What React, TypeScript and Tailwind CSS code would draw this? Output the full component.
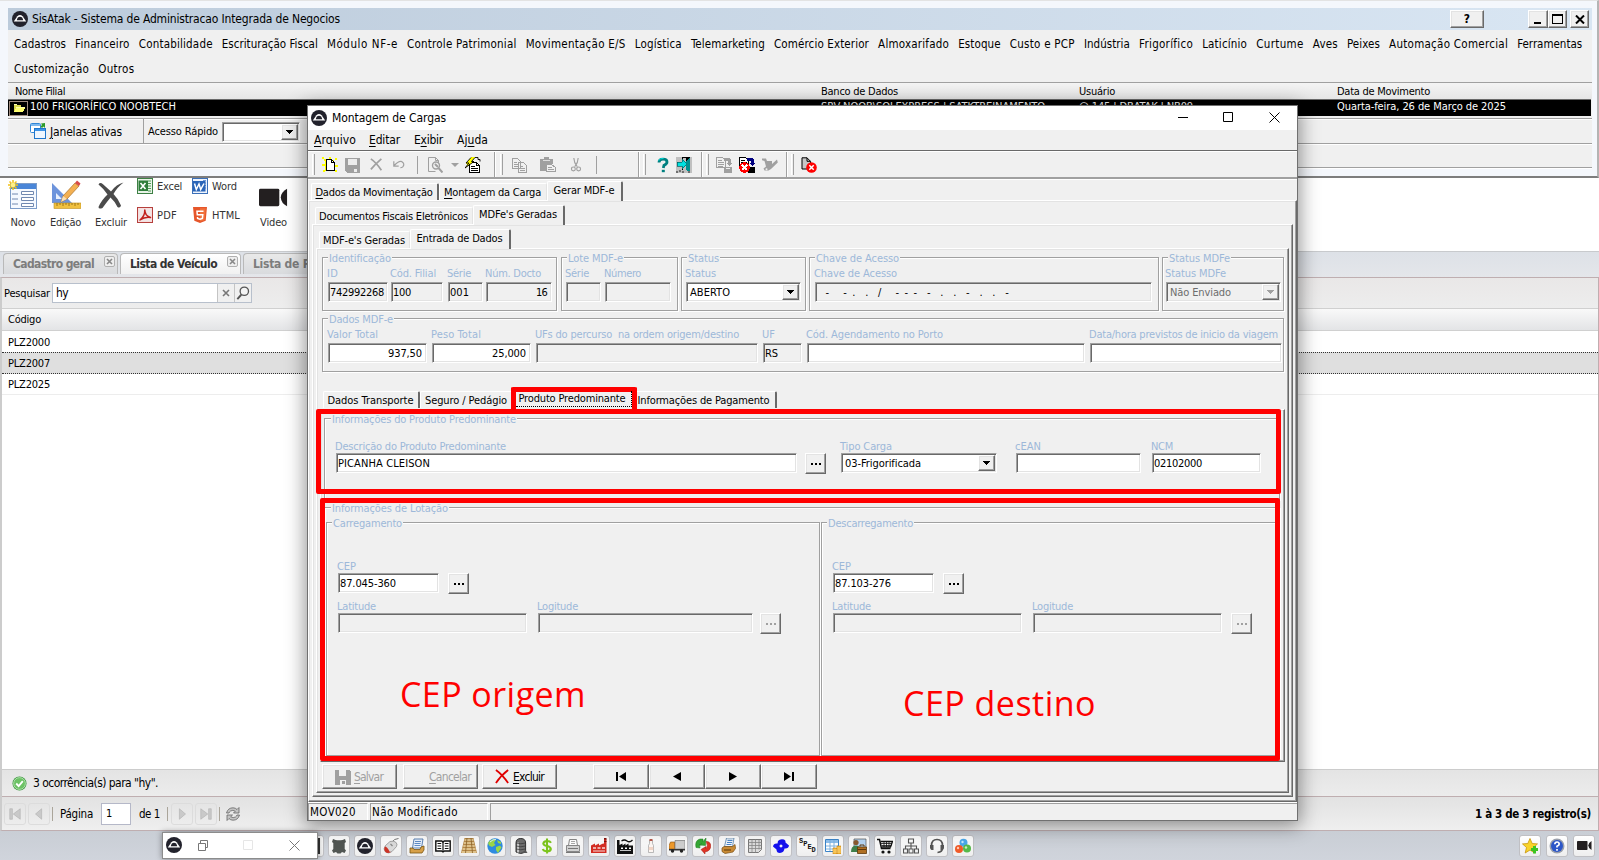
import React, { useLayoutEffect, useRef, useState } from "react";

/* ---------- text ---------- */

type TProps = { w?: number; className?: string; children: string; u?: number };

/* Text run whose tracking is adjusted so that it takes up exactly `w` pixels. `u` underlines one letter. */
function T({ w, className = "", children, u }: TProps) {
  const ref = useRef<HTMLSpanElement>(null);
  const [ls, setLs] = useState(0);
  useLayoutEffect(() => {
    if (!w || !ref.current) return;
    const natural = ref.current.getBoundingClientRect().width - ls * children.length;
    setLs((w - natural) / children.length);
  }, [w, children]);
  return (
    <span ref={ref} style={{ letterSpacing: ls }} className={"inline-block shrink-0 whitespace-pre leading-[14px] " + className}>
      {u === undefined ? (
        children
      ) : (
        <>
          {children.slice(0, u)}
          <span className="underline underline-offset-2">{children[u]}</span>
          {children.slice(u + 1)}
        </>
      )}
    </span>
  );
}

/* ---------- bevels ---------- */

const RAISED =
  "border border-t-white border-l-white border-r-[#696969] border-b-[#696969] shadow-[inset_-1px_-1px_0_#a0a0a0,inset_1px_1px_0_#e3e3e3]";
const SUNKEN =
  "border border-t-[#a0a0a0] border-l-[#a0a0a0] border-r-white border-b-white shadow-[inset_1px_1px_0_#696969,inset_-1px_-1px_0_#e3e3e3]";

function Group({ title, tw, className = "", pl = "pl-[5px]", children }: { title: string; tw: number; className?: string; pl?: string; children?: React.ReactNode }) {
  return (
    <div className={"shrink-0 border border-[#a0a0a0] shadow-[inset_1px_1px_0_#fff,1px_1px_0_#fff] " + className}>
      <div className={"flex h-0 items-center " + pl}>
        <span className="flex shrink-0 bg-[#f0f0f0] px-px">
          <T w={tw} className="!leading-[13px] text-[#9db8d9]">{title}</T>
        </span>
      </div>
      {children}
    </div>
  );
}

function Field({ label, lw, className = "", value = "", vw, right, grey, tight, combo, off }: {
  label: string; lw: number; className?: string; value?: string; vw?: number;
  right?: boolean; grey?: boolean; tight?: boolean; combo?: boolean; off?: boolean;
}) {
  return (
    <div className={"flex shrink-0 flex-col " + (tight ? "" : "gap-[2px] ") + className}>
      <div className="flex h-[14px] items-start pt-px">
        <T w={lw} className="-ml-px !leading-[13px] text-[#9db8d9]">{label}</T>
      </div>
      <div className={SUNKEN + " flex h-[20px] items-center " + (grey || off ? "bg-[#f0f0f0] " : "bg-white ") + (combo ? "pr-px pl-[3px]" : right ? "justify-end pr-[4px]" : "pl-px")}>
        <T w={vw} className={(combo ? "pt-[2px] " : "pt-px ") + (off ? "text-[#6d6d6d]" : "text-black")}>{value}</T>
        {combo && <ComboArrow off={off} />}
      </div>
    </div>
  );
}

function ComboArrow({ off }: { off?: boolean }) {
  return (
    <span className={RAISED + " ml-auto flex h-[16px] w-[17px] shrink-0 items-center justify-center bg-[#f0f0f0]"}>
      <svg width="7" height="4" viewBox="0 0 7 4" shapeRendering="crispEdges"><path d="M0 0h7v1H6v1H5v1H4v1H3V3H2V2H1V1H0z" fill={off ? "#a0a0a0" : "#000"} /></svg>
    </span>
  );
}

function Dots({ off, className = "" }: { off?: boolean; className?: string }) {
  return (
    <button className={RAISED + " flex h-[21px] w-[21px] shrink-0 items-center justify-center bg-[#f0f0f0] " + className}>
      <svg width="12" height="3" viewBox="0 0 12 3" shapeRendering="crispEdges"><path d="M1 1h2v2H1zM5 1h2v2H5zM9 1h2v2H9z" fill={off ? "#a0a0a0" : "#000"} /></svg>
    </button>
  );
}

function Tab({ label, w, className = "", active, edge, u }: { label: string; w: number; className?: string; active?: boolean; edge?: boolean; u?: number }) {
  return (
    <div
      className={
        "flex shrink-0 justify-center rounded-t-[2px] border-t border-l border-t-white border-l-white bg-[#f0f0f0] pr-px " +
        (edge ? "border-r-2 border-r-[#696969] " : "border-r border-r-[#e3e3e3] ") +
        (active ? "z-10 -mb-px h-[20px] pt-[2px] " : "h-[17px] items-center pt-px ") + className
      }
    >
      <T w={w} u={u} className="text-black">{label}</T>
    </div>
  );
}

/* ---------- icons ---------- */

function Svg({ s = 16, vb = "0 0 16 16", crisp, children }: { s?: number; vb?: string; crisp?: boolean; children: React.ReactNode }) {
  return <svg width={s} height={s} viewBox={vb} fill="none" className="shrink-0" shapeRendering={crisp ? "crispEdges" : "auto"}>{children}</svg>;
}

const Atak = ({ s = 16 }: { s?: number }) => (
  <Svg s={s}>
    <circle cx="8" cy="8" r="8" fill="#22222c" />
    <path d="M1.800 10.600 5.400 5.300Q8 2.800 10.600 5.300L14.200 10.600Z" fill="#fff" />
    <path d="M4.800 9.200Q5.400 5.800 8 5.800t3.200 3.400z" fill="#22222c" />
  </Svg>
);

const I = {
  folder: <Svg s={14} crisp><path d="M2 4h4v1h4v3H5l-3 4z" fill="#d8d850" /><path d="M5 8h10l-2 4H2z" fill="#ffff70" /><path d="M2 3h4v1H2zM5 7h10v1H5z" fill="#ffffb0" /><path d="M2 12h12v1H2z" fill="#888820" /></Svg>,
  windows: <Svg><rect x=".5" y=".5" width="10" height="9" rx="1" fill="#fff" stroke="#2f86d8" /><rect x="1" y="1" width="9" height="2" fill="#7db8ee" /><rect x="4.500" y="5.500" width="11" height="10" fill="#eef6ff" stroke="#1f76cc" /><rect x="5" y="6" width="10" height="2" fill="#3d93e6" /><path d="M15 0l-4 .4L12 2 10.500 3.500 12 5l1.500-1.500L15 5z" fill="#2a9a2a" /></Svg>,
  novo: <Svg s={30} vb="0 0 30 30"><rect x="2.500" y="3.500" width="26" height="25" fill="#f5f9ff" stroke="#7c9cc9" /><rect x="3" y="4" width="25" height="5" fill="#4a86d8" /><path d="M4 14h6M4 19h6M4 24h6" stroke="#7088b0" /><path d="M13.500 11.500h12v3h-12zM13.500 17.500h12v3h-12zM13.500 23.500h12v3h-12z" fill="#fff" stroke="#7088b0" /><path d="M5 0v10M0 5h10M1.500 1.500l7 7M8.500 1.500l-7 7" stroke="#f2c21a" strokeWidth="1.500" /><circle cx="5" cy="5" r="2.300" fill="#fff08a" /></Svg>,
  edicao: <Svg s={30} vb="0 0 30 30"><path d="M1 3v20h20z" fill="#6d94dc" /><path d="M5 13v6h6z" fill="#e8f0fd" /><rect x="3" y="23" width="27" height="5.500" fill="#f0c040" stroke="#c09020" strokeWidth=".6" /><path d="M6 23v3M9 23v2M12 23v3M15 23v2M18 23v3M21 23v2M24 23v3M27 23v2" stroke="#8a6410" strokeWidth=".8" /><path d="M10 22l2-6L24 3l4 3-12 13z" fill="#f3b052" stroke="#a8702a" strokeWidth=".7" /><path d="M24 3l2-2.500 3.500 3L28 6z" fill="#d84a4a" /><path d="M10 22l2-6 4 3z" fill="#f8e0b8" /></Svg>,
  excluir: <Svg s={28} vb="0 0 28 28"><path d="M1.500 3.500Q3 .8 6 3.200l8 7.300Q19.500 3 26.500 1.500 20 6.500 16.500 13q5 5 7.500 11.500-.8 3-3.500 1.500-3-6-7-9.500-4 5-8 10.500-4 1.500-4-1Q4.500 19 10.500 13.500 7 8 1.500 3.500z" fill="#4b4b4b" /></Svg>,
  excel: <Svg><rect x=".5" y=".5" width="15" height="15" fill="#e9f3e8" stroke="#3d8044" /><path d="M11 3h3M11 5.500h3M11 8h3M11 10.500h3M11 13h3" stroke="#4e9a56" /><rect x="1.500" y="2.500" width="9.500" height="10.500" fill="#2f7d3a" /><path d="M3.500 5l5 6M8.500 5l-5 6" stroke="#fff" strokeWidth="1.600" /></Svg>,
  word: <Svg><rect x=".5" y=".5" width="15" height="15" fill="#eef4fd" stroke="#3b6fb8" /><path d="M11 2.500h3M11 5h3M13 7.500h1M13 10h1" stroke="#6b96d4" /><rect x="1" y="3" width="12.500" height="10.500" fill="#2a65b8" /><path d="M2.500 5.500l1.800 6L7 6l1.700 5.500L12 5.500" stroke="#fff" strokeWidth="1.500" /></Svg>,
  pdf: <Svg><rect x=".5" y=".5" width="15" height="15" fill="#f7dede" stroke="#b5403c" /><rect x="2" y="2" width="12" height="12" fill="#f1e6e6" /><path d="M3 13Q8 9 7.800 3 8 9 13.500 10.500 8 9.500 3 13z" stroke="#c2201c" strokeWidth="1.500" strokeLinejoin="round" /></Svg>,
  html: <Svg><path d="M1 0h14l-1.300 13.800L8 16l-5.700-2.200z" fill="#e6562a" /><path d="M8 1.200h5.700l-1.100 11.700L8 14.600z" fill="#f0713c" /><path d="M11.500 4.200H5l.3 3.500h5.500l-.4 3.700L8 12.200l-2.400-.8-.1-1.400" stroke="#fff" strokeWidth="1.500" /></Svg>,
  video: (s: number) => <Svg s={s} vb="0 0 30 30"><rect x="0" y="6" width="21" height="18" rx="1.500" fill="#231f20" /><path d="M22.500 15Q23 9 29 6v18q-6-3-6.500-9z" fill="#231f20" /></Svg>,
  check: <Svg s={15}><circle cx="8" cy="8" r="7.500" fill="#3f9a42" /><circle cx="8" cy="8" r="6.300" fill="#6cc265" stroke="#c9ecc4" strokeWidth=".8" /><path d="M4.500 8l2.600 2.800L11.500 5.500" stroke="#fff" strokeWidth="2" /></Svg>,
  refresh: <Svg><path d="M1.500 7Q3 1.800 8 1.800q2.500 0 4 1.700L14 1.500V7H8.500l1.800-1.800Q7.800 3.600 5.500 5 4.300 5.800 4 7zM14.500 9q-1.500 5.200-6.500 5.200-2.500 0-4-1.700L2 14.500V9h5.500l-1.800 1.800Q8.200 12.400 10.500 11q1.200-.8 1.500-2z" fill="#c4c4c4" stroke="#666" strokeWidth=".8" /></Svg>,
  first: <Svg s={14}><path d="M2 2h3v12H2zM14 2v12L6 8z" fill="#c9c9c9" stroke="#a8a8a8" strokeWidth=".6" /></Svg>,
  prev: <Svg s={14}><path d="M11 2v12L4 8z" fill="#c9c9c9" stroke="#a8a8a8" strokeWidth=".6" /></Svg>,
  next: <Svg s={14}><path d="M5 2v12l7-6z" fill="#c9c9c9" stroke="#a8a8a8" strokeWidth=".6" /></Svg>,
  last: <Svg s={14}><path d="M11 2h3v12h-3zM2 2v12l8-6z" fill="#c9c9c9" stroke="#a8a8a8" strokeWidth=".6" /></Svg>,
  lens: <Svg s={14}><circle cx="9.500" cy="6" r="4.800" stroke="#555" strokeWidth="1.500" fill="#f4f4f4" /><path d="M6 10l-4.500 5" stroke="#555" strokeWidth="2.200" /></Svg>,
};

const G = "#a0a0a0";
const Tb = {
  novo: <Svg crisp><path d="M0 0h2v2H0zM2 2h2v2H2zM7 0h2v2H7zM13 1h2v2h-2zM0 7h3v2H0zM13 8h3v2h-3zM1 13h2v2H1zM13 13h2v2h-2zM3 3h9v11H3z" fill="#ffff00" /><path d="M4.500 2.500h5l3 3v8h-8z" fill="#fff" stroke="#000" /><path d="M9.500 2.500v3h3" stroke="#000" /></Svg>,
  save: <Svg crisp><path d="M0 1h15v15H2l-2-2z" fill={G} /><path d="M3 2h9v6H3z" fill="#ececec" /><path d="M9 12h3v3H9z" fill="#ececec" /></Svg>,
  del: <Svg s={14}><path d="M1 1q6 4 12 13M13 1Q6 7 1 13" stroke={G} strokeWidth="2" /></Svg>,
  undo: <Svg s={13}><path d="M1 4v6h6M1.500 9.500Q7 3 11 4.500q4 2.500 1 6.500-1 1-3 1" stroke={G} strokeWidth="1.500" /></Svg>,
  preview: <Svg><path d="M1.500.5h7l3 3v3M8.500.5v3h3M1.500.5v14h7" stroke={G} /><circle cx="9" cy="8.500" r="3.500" stroke={G} strokeWidth="1.400" /><path d="M8 7l3 3M11.500 11l4 4.500" stroke={G} strokeWidth="2" /></Svg>,
  props: <Svg crisp><path d="M4.500 5.500h7l3 3v7h-10z" fill="#fff" stroke="#000" /><path d="M11.500 5.500v3h3M6 9.500h4M6 11.500h7M6 13.500h7" stroke="#000" /><path d="M6 0h4L7 4h3l-5 3-5 4 3-4.500H1z" fill="#ffff00" /><path d="M6 .5L1 6h3L0 11l9-6.500H6.500L10 .500h3v2h2v2" stroke="#000" shapeRendering="auto" strokeWidth=".9" /></Svg>,
  copy: <Svg crisp><path d="M.5 1.500h5l3 3v7h-8zM6.500 5.500h5l3 3v7h-8z" fill="#f0f0f0" stroke={G} /><path d="M2 5h3M2 7h4M2 9h4M8 9h3M8 11h5M8 13h5" stroke={G} /></Svg>,
  paste: <Svg crisp><path d="M0 2h4V0h5v2h4v5H7v7H0z" fill={G} /><path d="M3 3h7v1H3z" fill="#ddd" /><path d="M6.500 7.500h5l4 3v4h-9z" fill="#f0f0f0" stroke={G} /><path d="M8 10.500h4M8 12.500h6" stroke={G} /></Svg>,
  cut: <Svg s={14}><path d="M5.500 0q0 5 4 10M10.500 0q0 5-4 10" stroke={G} strokeWidth="1.300" /><circle cx="5" cy="12.500" r="2.200" stroke={G} strokeWidth="1.300" /><circle cx="11" cy="12.500" r="2.200" stroke={G} strokeWidth="1.300" /></Svg>,
  help: <Svg><path d="M4 5.500Q4 2.200 8 2.200t4 2.800Q12 7 9 8.300L8.300 11" stroke="#008080" strokeWidth="2.800" /><path d="M6.800 14h3" stroke="#008080" strokeWidth="2.400" /><path d="M3.500 3.500Q5.500 1 8.500 1.500" stroke="#00dede" /></Svg>,
  exit: <Svg crisp><path d="M0 0h16v16H0z" fill="#c0c0c0" /><path d="M6 0h8v13H6z" fill="#000" /><path d="M7 1h3v12H7z" fill="#c0c0c0" /><path d="M14 1v15l-4-3V4z" fill="#009090" /><path d="M1 5h5V2l5 5-5 5V9H1z" fill="#00e0e0" stroke="#006060" strokeWidth=".7" /><path d="M0 14h2v2H0zM3 13h2v2H3zM6 14h2v2H6zM12 14h2v2h-2z" fill="#707070" /></Svg>,
  copyDisk: <Svg crisp><path d="M.5.5h6l3 3v7h-9z" stroke={G} /><path d="M2 3h4M2 5h6M2 7h6M2 9h5" stroke={G} /><path d="M8 1h5l2 2v3h1l-3 3-3-3h2V4H8zM8 10h8v6H8z" fill={G} /><path d="M10 11h4v1h-4z" fill="#eee" /></Svg>,
  cancelDisk: <Svg crisp><path d="M.5.500h6l3 3v7h-9z" fill="#fff" stroke="#000" /><path d="M2 3h4M2 5h6" stroke="#000" /><path d="M8 1h5l2 2v3h1l-3 3-3-3h2V4H8z" fill="#000080" /><path d="M9 10h7v6H9z" fill="#000" /><circle cx="5.500" cy="10.500" r="5.300" fill="#f00" /><path d="M3 8l5 5M8 8l-5 5" stroke="#fff" strokeWidth="1.500" /></Svg>,
  cart: <Svg><path d="M0 1.500h4l1 2.500h5v3l5-4.500.8 3L9 12l-2.500 1.500h-4l-1-2L4 9.500 2.500 4 0 3.300z" fill={G} /><circle cx="4.500" cy="12.300" r="1" fill="#eee" /></Svg>,
  docX: <Svg><path d="M1 .8h5l3.500 3.500V12H1z" fill="#c8c8c8" stroke="#000" /><path d="M6 .8v3.500h3.500" stroke="#000" /><circle cx="10.500" cy="10.500" r="5.300" fill="#f00" /><path d="M8.300 8.300l4.400 4.400M12.700 8.300l-4.400 4.400" stroke="#fff" strokeWidth="1.500" /></Svg>,
};

const dock: React.ReactNode[] = [
  <Svg><path d="M2 1l2.500 1q3.500.6 7 0L14 1l1 3-1.300 1v6l1.300 1.500-1.500 2.500-2.500-1-1.500 1.500h-3L5 14l-2.500 1L1 12.500 2.300 11V5L1 4z" fill="#515653" /></Svg>,
  <Atak />,
  <Svg><path d="M9 4Q11 .8 15.500.5" stroke="#777" /><path d="M2.500 7.500L7 3.500q3.500-1 5.500.5 2.500 2 1 4.500L9 13.500q-3.500 2.800-6.500.5-3-3 0-6.500z" fill="#dadada" stroke="#888" strokeWidth=".7" /><path d="M2 8.500q2.500.5 4.500 5L8 14q-3.500 2-5.500 0Q.3 11.500 2 8.500z" fill="#cc3326" /><path d="M7.500 6l2 2" stroke="#888" strokeWidth="1.300" /></Svg>,
  <Svg><path d="M5 1h9l-1.500 9h-9z" fill="#eaf2fc" stroke="#4d76ad" strokeWidth=".9" /><path d="M6 3.500h6M5.500 5.500h6M5.500 7.500h6" stroke="#5f8cc6" /><path d="M1 10h3l1 1.500h6L12 9l3-1v4l-2 3H1z" fill="#d7a048" stroke="#7a5512" strokeWidth=".8" /></Svg>,
  <Svg><path d="M.8 3h6L8 4l1.200-1h6v10H9.500L8 14l-1.500-1H.8z" fill="#fff" stroke="#111" strokeWidth="1.400" /><path d="M8 4v10M2.500 5.500h3.700M2.500 8h3.700M2.500 10.500h3.700M9.800 5.500h3.700M9.800 8h3.700M9.800 10.500h3.700" stroke="#111" strokeWidth="1.200" /></Svg>,
  <Svg><path d="M3.500 0h9L16 15H0z" fill="#b58848" /><path d="M3.500 2h9M3 5h10M2.300 8h11.400M1.500 11h13M.8 14h14.400" stroke="#ecd4a0" strokeWidth="1.400" /><path d="M6 0L4.500 15M10 0l1.500 15" stroke="#8a6228" strokeWidth=".8" /></Svg>,
  <Svg><circle cx="8" cy="8" r="7.700" fill="#2f8be0" /><path d="M3 2.500Q7 0 9 1.500L7 5l1.500 2L5 9 2 7.500 1 5zM9 9l4-1.500 1.500 2L11 15 9 12zM10 2l4 2v2l-3-1z" fill="#9cd84a" /><path d="M3 4Q6 1 9 1.500" stroke="#d8f2ff" /></Svg>,
  <Svg><path d="M3 5q0-4.500 4.800-4.500T12.600 5v9q-4.800 3-9.600 0z" fill="#6f6f6f" stroke="#333" /><path d="M5 4.500v10" stroke="#ddd" strokeWidth="1.600" /><path d="M3 5q4.800 1.500 9.500 0M3 8q4.800 1.500 9.500 0M3 11q4.800 1.500 9.500 0" stroke="#333" strokeWidth=".7" /><path d="M12.500 12l2 3H8z" fill="#555" /></Svg>,
  <Svg><path d="M12 4.800Q11 3 8 3T4.300 5.500Q4.500 7.300 8 8t3.800 3q-.3 2.300-3.800 2.300T3.800 11M8 .5v15" stroke="#7cc51c" strokeWidth="2.100" /></Svg>,
  <Svg><path d="M4.500 1.500h7l1 6h-9z" fill="#fff" stroke="#888" /><path d="M6 3.500h4M6 5.500h4" stroke="#aaa" /><path d="M1.500 7.500h13v6h-13z" fill="#d2d2d2" stroke="#888" /><path d="M3 10.500h10M1 14.500h14" stroke="#777" /></Svg>,
  <Svg><path d="M0 15V7.500L4 5.500v2l4-2v2l3.500-1.700L13 5.500V1h2.500v14z" fill="#d32c22" /><path d="M13 0h2.500v1.500H13zM13 3h2.500v1H13z" fill="#7e130d" /><path d="M2 9.300h3v1.500H2zM6.500 9.300h3v1.500h-3zM11 9.300h3v1.500h-3zM2 12.500h12v1H2z" fill="#f7d9d6" /></Svg>,
  <Svg><path d="M0 2h2.500v5l3-1.500v2l3-2v2l3-2v2H16v8.500H0z" fill="#111" /><path d="M4 9.500h2v1.500H4zM8 9.500h2v1.500H8zM12 9.500h2v1.500h-2zM3 13h11v-.8H3z" fill="#fff" /><path d="M4.500 3q2.800-2 5.500 0t5.500-1" stroke="#111" strokeWidth="1.300" /></Svg>,
  <Svg><path d="M6.500 2.500h3v3l1 2v7h-5v-7l1-2z" fill="#fdf6f2" stroke="#aaa" strokeWidth=".8" /><path d="M6.500 1h3v2h-3z" fill="#b5584a" /><path d="M5.800 9h4.400v3H5.800z" fill="#f2d5c6" /></Svg>,
  <Svg><path d="M6 2.500h10v8.500H6z" fill="#cfcfcf" stroke="#7a7a7a" strokeWidth=".7" /><path d="M0 7.500L1.500 4H5.500v7H0z" fill="#ee9a2c" stroke="#8b5010" strokeWidth=".6" /><path d="M0 11h16v1.500H0z" fill="#333" /><circle cx="3.500" cy="13" r="1.700" fill="#222" /><circle cx="12.500" cy="13" r="1.700" fill="#222" /></Svg>,
  <Svg><path d="M1 9.500Q-.5 2.500 5 1h3v2.500L11 0v0L10.500 7.500 4.500 7 6.500 5Q4 6 5 10z" fill="#35a835" stroke="#1f7a1f" strokeWidth=".5" /><path d="M11 3.500q4-.5 4.800 4 0 5.500-5.800 6.500v2L6 11.500l5-3v2q2.500-2.500 0-7z" fill="#df3426" stroke="#a01a10" strokeWidth=".5" /></Svg>,
  <Svg><path d="M5.500 0H13l-1.500 8.500H3.500z" fill="#f2f6fb" stroke="#5580a8" strokeWidth=".8" /><path d="M6.500 2.300h5M6 4.500h5M5.500 6.500h5" stroke="#4a86c8" strokeWidth="1.200" /><path d="M1 10l2-1.500h8.500L14 6.500l.5 4L12 14l-8 1.500-3-2z" fill="#c98a34" stroke="#7a4f14" strokeWidth=".7" /><path d="M3 12h7" stroke="#5a3606" /></Svg>,
  <Svg><path d="M1.500 1.500h13v10l-3 3h-10z" fill="#dcdcdc" stroke="#777" /><path d="M1.500 4.500h13M1.500 7.500h13M1.500 10.500h13M5 1.500v13M8.500 1.500v13M12 1.500v10" stroke="#888" strokeWidth=".8" /></Svg>,
  <Svg><path d="M5 3Q7 .5 11 1.500q2 1 1.500 3L16 7.500q-.5 3.500-4.500 3-.5 4-4.500 4.500-3.500 0-3.500-3.500L0 8.500Q.5 5 4.500 5.500z" fill="#1512ee" /><path d="M8 6.200L9.800 8 8 9.800 6.200 8z" fill="#f6f6f6" /></Svg>,
  <span className="flex h-4 w-4 justify-between font-mono text-[7px] leading-none font-bold text-[#111]"><i className="not-italic">S</i><i className="mt-[3px] not-italic">P</i><i className="mt-[6px] not-italic">E</i><i className="mt-[9px] not-italic">D</i></span>,
  <Svg><path d="M.5 1.500h13v12H.5z" fill="#fff" stroke="#3b84c8" /><path d="M1 2h12v3H1z" fill="#8fc0ee" /><path d="M1 8h12M1 11h12M5 2v11M9 2v11" stroke="#7fb2e0" /><path d="M8 10h4v6H8zM12 8h4v8h-4z" fill="#f5b73a" stroke="#c68512" strokeWidth=".6" /><path d="M8 12h4M8 14h4M12 10h4M12 12h4M12 14h4" stroke="#fbe09a" strokeWidth=".7" /></Svg>,
  <Svg><path d="M3 1h12v9H3z" fill="#b5d4f2" stroke="#555" strokeWidth=".7" /><circle cx="5" cy="4.500" r="2.600" fill="#8a5a30" /><path d="M0 14q0-6.500 5-6.500t5 6.500z" fill="#3f7f4a" /><path d="M6.500 9h9v6.500h-9z" fill="#b06f22" stroke="#5d370a" strokeWidth=".8" /><path d="M9 8.500V7h4v1.500M7 11.500h8" stroke="#5d370a" /></Svg>,
  <Svg><path d="M0 1.500h2.500l2 9h9" stroke="#111" strokeWidth="1.500" /><path d="M3.500 3.500H15.500L13.500 9H5" stroke="#111" strokeWidth="1.300" /><path d="M4 5.500h11M4.500 7.500h10M7 3.500v5.500M9.500 3.500v5.500M12 3.500v5.500" stroke="#111" strokeWidth=".8" /><circle cx="6" cy="14" r="1.600" fill="#111" /><circle cx="12" cy="14" r="1.600" fill="#111" /></Svg>,
  <Svg><path d="M5.500 1h5v4h-5zM.5 11h4v4h-4zM6 11h4v4H6zM11.500 11h4v4h-4zM8 5v6M2.500 11V8h11v3" stroke="#555" strokeWidth="1.100" /></Svg>,
  <Svg><path d="M2.500 10V7.500q0-6 5.500-6t5.500 6V10q0 4-5 4.500" stroke="#555" strokeWidth="1.700" /><path d="M1 7h3.500v5H2.500Q1 11 1 9.500zM15 7h-3.500v5h2Q15 11 15 9.500z" fill="#555" /></Svg>,
  <Svg><circle cx="8.500" cy="4.800" r="4" fill="#4aa8ea" /><circle cx="4" cy="11" r="4" fill="#f05a28" /><circle cx="12" cy="10.500" r="4" fill="#56b94a" /><circle cx="7.500" cy="4" r="1.200" fill="#c6e8ff" /><circle cx="3" cy="10" r="1.200" fill="#ffc8b0" /><circle cx="11" cy="9.500" r="1.200" fill="#c8f0c0" /></Svg>,
];

function DockBtn({ children, className = "" }: { children: React.ReactNode; className?: string }) {
  return <div className={"flex h-[22px] w-[22px] shrink-0 items-center justify-center rounded-[3px] border border-[#c0c0c4] bg-gradient-to-b from-white to-[#eeeeee] " + className}>{children}</div>;
}

/* ---------- main window ---------- */

const menu1: [string, number][] = [
  ["Cadastros", 52], ["Financeiro", 54.5], ["Contabilidade", 74], ["Escrituração Fiscal", 96], ["Módulo NF-e", 71], ["Controle Patrimonial", 109.500],
  ["Movimentação E/S", 100], ["Logística", 47], ["Telemarketing", 74], ["Comércio Exterior", 95], ["Almoxarifado", 71], ["Estoque", 42.500],
  ["Custo e PCP", 65], ["Indústria", 46], ["Frigorífico", 54], ["Laticínio", 45], ["Curtume", 47.500], ["Aves", 25], ["Peixes", 33], ["Automação Comercial", 119], ["Ferramentas", 65],
];

function MainWindow() {
  return (
    <section className="flex h-[178px] shrink-0 flex-col border-t border-r-2 border-b-2 border-t-[#e3e3e3] border-r-[#b4b4b4] border-b-[#7d7d7d] bg-[#f4f7fc] pt-[7px] pr-[5px] pl-[8px] text-[11.500px]">
      <div className="flex h-[22px] shrink-0 items-center bg-gradient-to-r from-[#bccbdb] to-[#d9e6f3] pr-[3px] pl-[4px]">
        <Atak />
        <T w={308} className="ml-1 text-[12px]">SisAtak - Sistema de Administracao Integrada de Negocios</T>
        <button className={RAISED + " mr-[44px] ml-auto flex h-[18px] w-[34px] items-center justify-center bg-[#f0f0f0] text-[12px] font-bold"}>?</button>
        <button className={RAISED + " flex h-[18px] w-[20px] items-center justify-center bg-[#f0f0f0]"}><svg width="12" height="11" shapeRendering="crispEdges"><path d="M2 8h7v2H2z" /></svg></button>
        <button className={RAISED + " flex h-[18px] w-[19px] items-center justify-center bg-[#f0f0f0]"}><svg width="11" height="10" shapeRendering="crispEdges"><path d="M0 0h11v10H0zM1 2v7h9V2z" fillRule="evenodd" /></svg></button>
        <button className={RAISED + " ml-[3px] flex h-[18px] w-[19px] items-center justify-center bg-[#f0f0f0]"}><svg width="10" height="9"><path d="M1 .500l8 8M9 .500l-8 8" stroke="#000" strokeWidth="2" /></svg></button>
      </div>
      <div className="flex h-[137px] flex-col bg-[#f0f0f0]">
        <nav className="flex h-[27px] shrink-0 items-center gap-[9.120px] pl-[6px]">
          {menu1.map(([m, w]) => <T key={m} w={w}>{m}</T>)}
        </nav>
        <nav className="flex h-[25px] shrink-0 items-start gap-[9.300px] pt-[5px] pl-[6px]">
          <T w={75}>Customização</T><T w={36}>Outros</T>
        </nav>
        <div className="flex h-[17px] shrink-0 items-center border-t border-[#a0a0a0] bg-gradient-to-b from-[#f4f4f4] to-[#e6e6e6] pt-[2px] pl-[7px] text-[11px]">
          <T w={50} className="mr-[756px]">Nome Filial</T>
          <T w={77} className="mr-[181px]">Banco de Dados</T>
          <T w={36} className="mr-[222px]">Usuário</T>
          <T w={93}>Data de Movimento</T>
        </div>
        <div className="mr-px flex h-[17px] shrink-0 items-center border-t border-[#696969] bg-black pb-[2px] text-[11px] text-white">
          <span className="mt-[2px] ml-px flex h-[15px] w-[19px] items-center justify-center border border-[#a08c80]">{I.folder}</span>
          <T w={146} className="mr-[645px] ml-[2px]">100 FRIGORÍFICO NOOBTECH</T>
          <T w={224} className="mr-[34px]">{"SRV-NOOB\\SQLEXPRESS | SATKTREINAMENTO"}</T>
          <T w={114} className="mr-[144px]">@ 145 | DBATAK | NB09</T>
          <T w={169}>Quarta-feira, 26 de Março de 2025</T>
        </div>
        <div className="mt-[2px] flex h-[25px] shrink-0 items-stretch border-t border-[#a0a0a0] shadow-[inset_0_1px_0_#fff]">
          <div className="flex w-[136px] items-center border-r border-[#a0a0a0] pl-[22px]">
            {I.windows}
            <T w={72} u={0} className="ml-[4px] pt-px text-[12px]">Janelas ativas</T>
          </div>
          <div className="flex items-center pl-[4px] text-[11px]">
            <T w={70} className="pt-px">Acesso Rápido</T>
            <div className={SUNKEN + " mt-px ml-[4px] flex h-[20px] w-[78px] items-center bg-white pr-px"}><ComboArrow /></div>
          </div>
        </div>
        <div className="h-[25px] shrink-0 border-y border-[#a0a0a0] shadow-[inset_0_1px_0_#fff,0_1px_0_#fff]" />
      </div>
    </section>
  );
}

/* ---------- vehicle list behind the dialog ---------- */

function BigTool({ icon, label, w, className }: { icon: React.ReactNode; label: string; w: number; className: string }) {
  return (
    <div className={"flex flex-col items-center " + className}>
      <div className="flex h-[34px] items-center">{icon}</div>
      <T w={w} className="mt-[4px] text-[#333]">{label}</T>
    </div>
  );
}

function SmallTool({ icon, label, w }: { icon: React.ReactNode; label: string; w: number }) {
  return <div className="flex h-[16px] items-center gap-1">{icon}<T w={w} className="pt-px text-[#333]">{label}</T></div>;
}

function PageTab({ label, w, active, className }: { label: string; w: number; active?: boolean; className: string }) {
  return (
    <div className={"flex h-[21px] shrink-0 items-center rounded-t-[4px] border border-b-0 border-[#b9b9b9] pl-[9px] text-[12px] font-bold " + (active ? "bg-gradient-to-b from-white to-[#f1f1f1] text-[#333] " : "bg-gradient-to-b from-[#e9e9e9] to-[#d9dbde] text-[#7d7d7d] ") + className}>
      <T w={w}>{label}</T>
      <span className="mr-[2px] mb-[5px] ml-auto flex h-[11px] w-[11px] items-center justify-center rounded-[2px] border border-[#b0b0b0] bg-[#eee]">
        <svg width="7" height="7"><path d="M1 1l5 5M6 1L1 6" stroke="#888" strokeWidth="1.600" /></svg>
      </span>
    </div>
  );
}

function PageBtn({ children, className = "" }: { children: React.ReactNode; className?: string }) {
  return <span className={"flex h-[22px] w-[22px] items-center justify-center rounded-[3px] border border-[#dcdcdc] " + className}>{children}</span>;
}

function VehicleList() {
  return (
    <section className="flex h-[653px] shrink-0 flex-col bg-white text-[11px]">
      <div className="flex h-[73px] shrink-0 pl-[8px]">
        <BigTool icon={I.novo} label="Novo" w={25} className="w-[30px]" />
        <BigTool icon={I.edicao} label="Edição" w={31} className="ml-[12px] w-[31px]" />
        <BigTool icon={I.excluir} label="Excluir" w={32} className="ml-[14px] w-[32px]" />
        <div className="ml-[10px] flex w-[55px] flex-col gap-[13px]">
          <SmallTool icon={I.excel} label="Excel" w={25} />
          <SmallTool icon={I.pdf} label="PDF" w={20} />
        </div>
        <div className="flex w-[67px] flex-col gap-[13px]">
          <SmallTool icon={I.word} label="Word" w={25} />
          <SmallTool icon={I.html} label="HTML" w={28} />
        </div>
        <BigTool icon={<span className="pt-[5px]">{I.video(29)}</span>} label="Video" w={27} className="w-[29px]" />
      </div>
      <div className="flex h-[26px] shrink-0 items-end border-t border-[#c8cacd] bg-gradient-to-b from-[#dde1e7] to-[#e4e6ea] pb-[3px] pl-[3px]">
        <PageTab label="Cadastro geral" w={81} className="w-[115px]" />
        <PageTab label="Lista de Veículo" w={87} active className="ml-[2px] w-[121px]" />
        <PageTab label="Lista de Pessoas" w={97} className="ml-[2px] w-[125px]" />
      </div>
      <div className="flex grow flex-col border-t border-r border-b border-l-2 border-t-[#bfaeb0] border-r-[#bfaeb0] border-b-[#bfaeb0] border-l-[#cccccc]">
        <div className="flex h-[30px] shrink-0 items-center bg-gradient-to-b from-[#e9e7e7] to-[#ededed] pl-[2px]">
          <T w={46} className="pt-px">Pesquisar</T>
          <div className="ml-[2px] flex h-[20px] w-[200px] items-stretch border border-[#b8c0cc] bg-white">
            <T w={12} className="mt-[2px] ml-[3px] text-[12px]">hy</T>
            <span className="ml-auto flex w-[17px] items-center justify-center border-l border-[#c4c4c4] bg-[#f0f0f0]"><svg width="8" height="8"><path d="M1 1l6 6M7 1L1 7" stroke="#777" strokeWidth="1.600" /></svg></span>
            <span className="flex w-[17px] items-center justify-center border-l border-[#c4c4c4] bg-[#f0f0f0]">{I.lens}</span>
          </div>
        </div>
        <div className="flex h-[23px] shrink-0 items-center border-y border-[#d0d0d0] bg-gradient-to-b from-[#f9f9f9] to-[#e3e4e6] pl-[6px]"><T w={33}>Código</T></div>
        <div className="flex h-[21px] shrink-0 items-center pt-[2px] pl-[6px]"><T w={42}>PLZ2000</T></div>
        <div className="flex h-[22px] shrink-0 items-center border-y border-dotted border-[#333] bg-[#dfdfdf] pt-px pl-[6px]"><T w={42}>PLZ2007</T></div>
        <div className="flex h-[21px] shrink-0 items-center border-b border-[#ededed] pt-px pl-[6px]"><T w={42}>PLZ2025</T></div>
        <div className="grow" />
        <div className="flex h-[28px] shrink-0 items-center border-t border-b border-t-[#cccccc] border-b-[#bfaeb0] bg-gradient-to-b from-[#e4e4e4] to-[#ececec] pl-[10px] text-[12px]">
          {I.check}<T w={125} className="ml-[6px]">{'3 ocorrência(s) para "hy".'}</T>
        </div>
        <div className="flex h-[33px] shrink-0 items-center bg-gradient-to-b from-[#e2e2e2] to-[#efefef] pr-[7px] pl-[2px]">
          <PageBtn>{I.first}</PageBtn><PageBtn className="ml-[2px]">{I.prev}</PageBtn>
          <i className="ml-[2px] h-[14px] w-px bg-[#aaa59a]" />
          <T w={33} className="ml-[7px] text-[11.500px]">Página</T>
          <span className="ml-[8px] flex h-[22px] w-[30px] items-center border border-[#b5b8c8] bg-white pl-1"><T>1</T></span>
          <T w={21} className="ml-[8px] text-[11.500px]">de 1</T>
          <i className="mr-[3px] ml-[7px] h-[14px] w-px bg-[#aaa59a]" />
          <PageBtn>{I.next}</PageBtn><PageBtn className="ml-[2px]">{I.last}</PageBtn>
          <i className="mr-[5px] ml-[2px] h-[14px] w-px bg-[#aaa59a]" />
          {I.refresh}
          <T w={116} className="ml-auto text-[11.500px] font-bold">1 à 3 de 3 registro(s)</T>
        </div>
      </div>
    </section>
  );
}

/* ---------- dialog ---------- */

const Grip = ({ className = "" }: { className?: string }) => <i className={"h-[21px] w-[3px] shrink-0 border-r border-l border-r-[#a0a0a0] border-l-white " + className} />;
const Brk = ({ className = "" }: { className?: string }) => <i className={"h-[25px] w-[2px] shrink-0 border-r border-l border-r-white border-l-[#a0a0a0] " + className} />;
const Sep = ({ className = "" }: { className?: string }) => <i className={"h-[18px] w-px shrink-0 bg-[#a0a0a0] " + className} />;
const Ic = ({ className = "", children }: { className?: string; children: React.ReactNode }) => <span className={"flex w-[16px] shrink-0 justify-center " + className}>{children}</span>;

function ToolBar() {
  return (
    <div className="flex h-[26px] shrink-0 items-center border-t border-white pl-[4px]">
      <Grip /><Ic className="ml-[7px]">{Tb.novo}</Ic><Ic className="ml-[7px]">{Tb.save}</Ic><Ic className="ml-[8px]">{Tb.del}</Ic><Ic className="ml-[6px]">{Tb.undo}</Ic>
      <Sep className="ml-[10px]" /><Ic className="ml-[9px]">{Tb.preview}</Ic>
      <svg width="8" height="4" className="ml-[8px]"><path d="M0 0h8L4 4z" fill="#a0a0a0" /></svg>
      <Ic className="ml-[6px]">{Tb.props}</Ic><Brk className="ml-[13px]" />
      <Grip className="ml-[4px]" /><Ic className="ml-[9px]">{Tb.copy}</Ic><Ic className="ml-[12px]">{Tb.paste}</Ic><Ic className="ml-[12px]">{Tb.cut}</Ic>
      <Sep className="ml-[12px]" /><Brk className="ml-[41px]" />
      <Grip className="ml-[3px]" /><Ic className="ml-[9px]">{Tb.help}</Ic><Ic className="ml-[5px]">{Tb.exit}</Ic><Brk className="ml-[9px]" />
      <Grip className="ml-[3px]" /><Ic className="ml-[7px]">{Tb.copyDisk}</Ic><Ic className="ml-[7px]">{Tb.cancelDisk}</Ic><Ic className="ml-[7px]">{Tb.cart}</Ic><Brk className="ml-[8px]" />
      <Grip className="ml-[3px]" /><Ic className="ml-[7px]">{Tb.docX}</Ic>
    </div>
  );
}

function FormHeader() {
  return (
    <>
      <div className="mt-[8px] flex pl-[2px]">
        <Group title="Identificação" tw={62} className="h-[54px] w-[235px]">
          <div className="flex pt-[8px] pl-[5px]">
            <Field label="ID" lw={11} value="742992268" vw={54} grey className="w-[60px]" />
            <Field label="Cód. Filial" lw={46} value="100" vw={18} grey className="ml-[3px] w-[52px]" />
            <Field label="Série" lw={24} value="001" vw={19} grey className="ml-[5px] w-[35px]" />
            <Field label="Núm. Docto" lw={56} value="16" vw={11} right grey className="ml-[3px] w-[66px]" />
          </div>
        </Group>
        <Group title="Lote MDF-e" tw={55} className="ml-[4px] h-[54px] w-[117px]">
          <div className="flex pt-[8px] pl-[4px]">
            <Field label="Série" lw={24} grey className="w-[35px]" />
            <Field label="Número" lw={37} grey className="ml-[4px] w-[66px]" />
          </div>
        </Group>
        <Group title="Status" tw={31} className="ml-[3px] h-[54px] w-[125px]">
          <div className="flex pt-[8px] pl-[4px]">
            <Field label="Status" lw={31} value="ABERTO" vw={40} combo className="w-[115px]" />
          </div>
        </Group>
        <Group title="Chave de Acesso" tw={83} className="ml-[3px] h-[54px] w-[350px]">
          <div className="flex pt-[8px] pl-[5px]">
            <Field label="Chave de Acesso" lw={83} value="  -   - .  .  /   - - -  -  .  .  -  .  .  -" vw={193} grey className="w-[337px]" />
          </div>
        </Group>
        <Group title="Status MDFe" tw={61} className="ml-[3px] h-[54px] w-[122px]">
          <div className="flex pt-[8px] pl-[3px]">
            <Field label="Status MDFe" lw={61} value="Não Enviado" vw={61} combo off className="w-[115px]" />
          </div>
        </Group>
      </div>
      <div className="mt-[7px] flex pl-[2px]">
        <Group title="Dados MDF-e" tw={64} className="h-[54px] w-[962px]">
          <div className="flex pt-[8px] pl-[5px]">
            <Field label="Valor Total" lw={51} value="937,50" vw={34} right className="w-[99px]" />
            <Field label="Peso Total" lw={50} value="25,000" vw={34} right className="ml-[5px] w-[99px]" />
            <Field label="UFs do percurso  na ordem origem/destino" lw={204} grey className="ml-[5px] w-[222px]" />
            <Field label="UF" lw={13} value="RS" vw={13} grey className="ml-[5px] w-[39px]" />
            <Field label="Cód. Agendamento no Porto" lw={137} className="ml-[5px] w-[278px]" />
            <Field label="Data/hora previstos de inicio da viagem" lw={189} className="ml-[5px] w-[192px]" />
          </div>
        </Group>
      </div>
    </>
  );
}

function Place({ title, tw, className, longW, gap }: { title: string; tw: number; className: string; longW: string; gap: string }) {
  const cep = title === "Carregamento" ? "87.045-360" : "87.103-276";
  return (
    <Group title={title} tw={tw} className={"h-[234px] " + className}>
      <div className="flex pt-[36px] pl-[11px]">
        <Field label="CEP" lw={19} value={cep} vw={56} tight className="w-[101px]" />
        <Dots className="mt-[14px] ml-[9px]" />
      </div>
      <div className="flex pt-[5px] pl-[11px]">
        <Field label="Latitude" lw={39} tight grey className="w-[189px]" />
        <Field label="Logitude" lw={41} tight grey className={"ml-[11px] " + longW} />
        <Dots off className={"mt-[14px] " + gap} />
      </div>
    </Group>
  );
}

const navPaths = ["M0 0h2v9H0zM10 0v9L3 4.500z", "M9 0v9L1 4.500z", "M1 0v9l8-4.500z", "M8 0h2v9H8zM0 0v9l7-4.500z"];

function Dialog() {
  return (
    <section className="absolute top-[105px] left-[307px] isolate flex h-[716px] w-[991px] flex-col border border-[#707070] bg-[#f0f0f0] text-[11px] shadow-[0_3px_18px_2px_rgba(0,0,0,0.42)]">
      <div className="flex h-[24px] shrink-0 items-center bg-white pb-px pl-[3px]">
        <Atak />
        <T w={114} className="ml-[5px] text-[12px]">Montagem de Cargas</T>
        <svg width="102" height="11" className="mr-[17px] ml-auto" fill="none" stroke="#000"><path d="M0 5.500h10M45.500.5h9v9h-9zM91.500.5l10 10M101.500.5l-10 10" /></svg>
      </div>
      <div className="flex h-[21px] shrink-0 items-center border-b border-[#696969] pl-[6px] text-[12px]">
        <T w={42} u={0}>Arquivo</T><T w={31} u={0} className="ml-[13px]">Editar</T><T w={29} u={1} className="ml-[14px]">Exibir</T><T w={31} u={2} className="ml-[14px]">Ajuda</T>
      </div>
      <ToolBar />
      <div className="h-[3px] shrink-0 border-t-2 border-b border-t-[#a0a0a0] border-b-white" />
      <div className="flex h-[20px] shrink-0 items-end pl-[3px]">
        <Tab label="Dados da Movimentação" w={117} u={0} edge className="w-[128px]" />
        <Tab label="Montagem da Carga" w={97} u={0} className="w-[108px]" />
        <Tab label="Gerar MDF-e" w={61} active edge className="w-[76px]" />
      </div>
      <div className={RAISED + " flex h-[602px] shrink-0 flex-col p-[3px]"}>
        <div className="flex h-[20px] shrink-0 items-end pl-[3px]">
          <Tab label="Documentos Fiscais Eletrônicos" w={149} className="w-[158px]" />
          <Tab label="MDFe's Geradas" w={78} active edge className="w-[92px]" />
        </div>
        <div className={RAISED + " flex h-[573px] shrink-0 flex-col p-[3px]"}>
          <div className="flex h-[20px] shrink-0 items-end pl-[3px]">
            <Tab label="MDF-e's Geradas" w={82} className="w-[91px]" />
            <Tab label="Entrada de Dados" w={86} active edge className="w-[101px]" />
          </div>
          <div className={RAISED + " flex h-[545px] shrink-0 flex-col px-[3px]"}>
            <FormHeader />
            <div className="mt-[17px] flex h-[20px] shrink-0 items-end pb-px pl-[3px]">
              <Tab label="Dados Transporte" w={86} edge className="w-[97px]" />
              <Tab label="Seguro / Pedágio" w={82} className="w-[93px]" />
              <Tab label="Produto Predominante" w={107} active className="w-[119px]" />
              <Tab label="Informações de Pagamento" w={132} edge className="w-[145px]" />
            </div>
            <div className={RAISED + " flex h-[353px] shrink-0 flex-col pl-[3px]"}>
              <Group title="Informações do Produto Predominante" tw={184} pl="pl-[6px]" className="mt-[8px] h-[82px] w-[956px]">
                <div className="flex pt-[20px] pl-[11px]">
                  <Field label="Descrição do Produto Predominante" lw={171} value="PICANHA CLEISON" vw={92} tight className="w-[461px]" />
                  <Dots className="mt-[14px] ml-[8px]" />
                  <Field label="Tipo Carga" lw={52} value="03-Frigorificada" vw={76} tight combo className="ml-[15px] w-[156px]" />
                  <Field label="cEAN" lw={26} tight className="ml-[19px] w-[125px]" />
                  <Field label="NCM" lw={22} value="02102000" vw={48} tight className="ml-[11px] w-[109px]" />
                </div>
              </Group>
              <Group title="Informações de Lotação" tw={116} pl="pl-[6px]" className="mt-[7px] h-[251px] w-[956px]">
                <div className="flex pt-[14px] pl-px">
                  <Place title="Carregamento" tw={69} className="w-[494px]" longW="w-[215px]" gap="ml-[7px]" />
                  <Place title="Descarregamento" tw={85} className="ml-px w-[457px]" longW="w-[189px]" gap="ml-[9px]" />
                </div>
              </Group>
            </div>
            <div className="mt-[2px] flex pl-[2px] text-[12px]">
              <button className={RAISED + " flex h-[25px] w-[75px] items-center pl-[12px] text-[#a0a0a0]"}>
                <Svg crisp><path d="M0 1h4v6h7V1h3l2 2v13h-5v-5H5v5H0z" fill="#a0a0a0" /><path d="M7 12h3v3H7z" fill="#a0a0a0" /></Svg>
                <T w={29} u={0} className="ml-[3px]">Salvar</T>
              </button>
              <button className={RAISED + " ml-[6px] flex h-[25px] w-[75px] items-center pl-[25px] text-[#a0a0a0]"}><T w={42} u={0}>Cancelar</T></button>
              <button className={RAISED + " ml-[4px] flex h-[25px] w-[75px] items-center pl-[12px]"}>
                <Svg s={15}><path d="M1 1q7 5 13 14M14 1Q6 7 1 15" stroke="#e00000" strokeWidth="1.900" /></Svg>
                <T w={31} u={0} className="ml-[3px]">Excluir</T>
              </button>
              <div className="ml-[36px] flex">
                {navPaths.map((d) => (
                  <button key={d} className={RAISED + " flex h-[25px] w-[56px] items-center justify-center"}><svg width="10" height="9"><path d={d} /></svg></button>
                ))}
              </div>
            </div>
          </div>
        </div>
      </div>
      <div className="flex h-[18px] shrink-0 gap-[2px] border-t border-white text-[11.500px]">
        <div className="flex w-[60px] items-center border-t border-l border-t-[#a0a0a0] border-l-[#a0a0a0] border-r border-r-white pl-px"><T w={46}>MOV020</T></div>
        <div className="flex w-[118px] items-center border-t border-l border-t-[#a0a0a0] border-l-[#a0a0a0] border-r border-r-white pl-px"><T w={86}>Não Modificado</T></div>
        <div className="grow border-t border-l border-[#a0a0a0]" />
      </div>
    </section>
  );
}

/* ---------- page ---------- */

export default function App() {
  return (
    <main className="relative flex h-[860px] w-[1599px] flex-col overflow-hidden bg-[#cdd2da] [font-family:'DejaVu_Sans_Condensed','DejaVu_Sans','Noto_Sans',sans-serif] text-black [font-stretch:condensed]">
      <MainWindow />
      <VehicleList />
      <div className="flex h-[29px] shrink-0 items-center gap-[4px] bg-gradient-to-b from-[#c9ced5] to-[#d0d4dc] pl-[302px]">
        <DockBtn><Svg><rect x="2" y="1" width="12" height="14" stroke="#333" strokeWidth="2" /></Svg></DockBtn>
        {dock.map((d, i) => <DockBtn key={i}>{d}</DockBtn>)}
        <DockBtn className="ml-auto"><Svg><path d="M8 .500l2.200 5 5.300.4-4 3.600 1.300 5.500L8 12l-4.800 3 1.300-5.500-4-3.600 5.300-.4z" fill="#f8d32a" stroke="#c8960c" strokeWidth=".8" /><path d="M9 10h2V8h3v2h2v3h-2v2.500h-3V13H9z" fill="#3cc421" /></Svg></DockBtn>
        <DockBtn className="ml-px"><Svg><circle cx="8" cy="8" r="7.500" fill="#9aa0ac" /><circle cx="8" cy="8" r="6" fill="#2c56c8" /><path d="M5.800 6.300Q6 4 8 4t2.200 2Q10.200 7.300 8 8.300v1.200M8 11v1.700" stroke="#fff" strokeWidth="1.700" /></Svg></DockBtn>
        <DockBtn className="mr-[4px] ml-px">{I.video(15)}</DockBtn>
      </div>

      <Dialog />

      <div className="absolute top-[832px] left-[162px] flex h-[27px] w-[156px] items-center border border-[#8c8c8c] bg-white pb-px pl-[3px] shadow-[0_0_6px_rgba(0,0,0,0.4)]">
        <Atak />
        <svg width="102" height="11" className="ml-[16px]" fill="none" stroke="#777"><path d="M.5 3.500h7v7h-7zM2.500 3V.5h7v7H8" /><path d="M45.500.500h9v9h-9z" stroke="#e6e6e6" /><path d="M91.500.5l10 10M101.500.5l-10 10" /></svg>
      </div>

      <div className="absolute top-[387px] left-[511px] h-[26px] w-[126px] rounded-[2px] border-[5px] border-b-0 border-[#ff0000]" />
      <div className="absolute top-[391px] left-[516px] h-[16px] w-[116px] border-r border-b border-dotted border-black" />
      <div className="absolute top-[409px] left-[316px] h-[85px] w-[965px] rounded-[2px] border-[5px] border-[#ff0000]" />
      <div className="absolute top-[498px] left-[320px] h-[263px] w-[960px] rounded-[2px] border-[5px] border-[#ff0000]" />
      <div className="absolute top-[672px] left-[400px] flex h-[44px] items-center [font-family:'Open_Sans',sans-serif] text-[34px] text-[#ff0000] [font-stretch:normal]"><T w={186} className="!leading-[44px]">CEP origem</T></div>
      <div className="absolute top-[681px] left-[903px] flex h-[44px] items-center [font-family:'Open_Sans',sans-serif] text-[34px] text-[#ff0000] [font-stretch:normal]"><T w={193} className="!leading-[44px]">CEP destino</T></div>
    </main>
  );
}
